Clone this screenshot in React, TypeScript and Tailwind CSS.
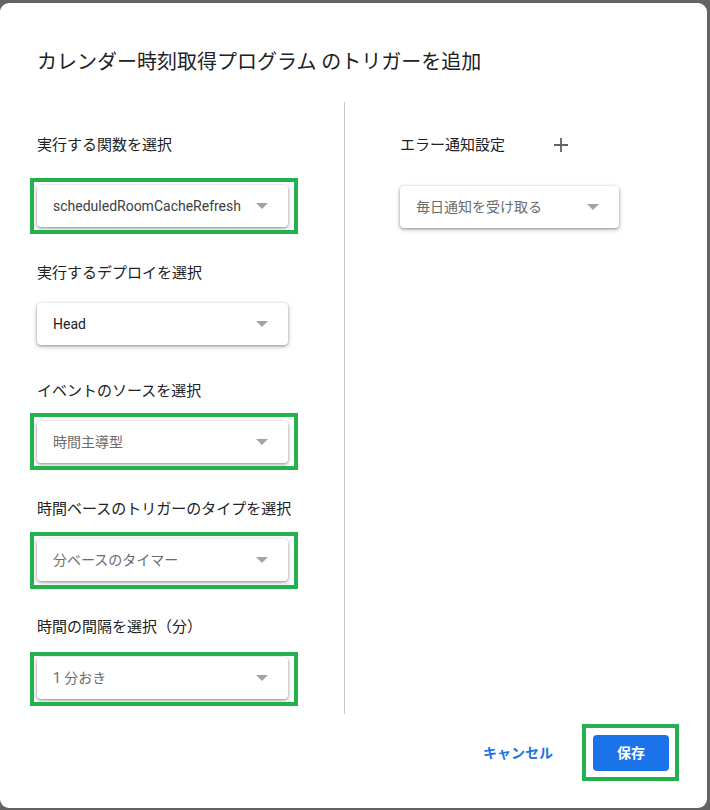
import React from "react";

const FONT = { fontFamily: 'Roboto, "Noto Sans CJK JP", sans-serif' };

function Arrow() {
  return (
    <svg width="12" height="6" viewBox="0 0 12 6" className="shrink-0">
      <path d="M0 0 L12 0 L6 6 Z" fill="#a3a3a3" />
    </svg>
  );
}

function Select({
  text,
  tone = "dark",
  width = "w-[251px]",
}: {
  text: string;
  tone?: "dark" | "mid" | "light";
  width?: string;
}) {
  const color =
    tone === "dark" ? "text-[#202124]" : tone === "mid" ? "text-[#3c4043]" : "text-[#6b6b6b]";
  return (
    <div
      className={`${width} h-[42px] bg-white rounded-[4px] flex items-center justify-between pl-4 pr-5 shadow-[0_1px_3px_rgba(0,0,0,0.38),0_2px_6px_rgba(0,0,0,0.14)]`}
    >
      <span className={`text-[14px] ${color} whitespace-nowrap`}>{text}</span>
      <Arrow />
    </div>
  );
}

function Green({
  children,
  cls,
}: {
  children: React.ReactNode;
  cls: string;
}) {
  return (
    <div className="relative w-fit">
      <span className={`absolute border-4 border-[#22b14c] pointer-events-none ${cls}`} />
      {children}
    </div>
  );
}

function Label({ children }: { children: React.ReactNode }) {
  return (
    <div className="h-5 leading-5 text-[15px] text-[#202124] whitespace-nowrap">{children}</div>
  );
}

export default function App() {
  return (
    <div className="w-[710px] h-[810px] bg-[#636363] pt-[3px] overflow-hidden" style={FONT}>
      <div className="w-[707px] h-[805px] bg-white rounded-[9px] flex flex-col">
        <div className="pt-[45px] pl-[37px] h-[99px]">
          <h1 className="text-[20px] leading-7 text-[#202124] font-normal whitespace-nowrap">
            カレンダー時刻取得プログラム のトリガーを追加
          </h1>
        </div>
        <div className="flex">
          <div className="w-[344px] pl-[37px] pt-[33px] pb-[15px] flex flex-col">
            <Label>実行する関数を選択</Label>
            <div className="mt-[30px]">
              <Green cls="-left-[7px] -top-[7px] -right-[10px] -bottom-[7px]">
                <Select text="scheduledRoomCacheRefresh" tone="mid" />
              </Green>
            </div>
            <div className="mt-[36px]">
              <Label>実行するデプロイを選択</Label>
            </div>
            <div className="mt-5">
              <Select text="Head" tone="dark" />
            </div>
            <div className="mt-[36px]">
              <Label>イベントのソースを選択</Label>
            </div>
            <div className="mt-5">
              <Green cls="-left-[7px] -top-[8px] -right-[10px] -bottom-[7px]">
                <Select text="時間主導型" tone="light" />
              </Green>
            </div>
            <div className="mt-[36px]">
              <Label>時間ベースのトリガーのタイプを選択</Label>
            </div>
            <div className="mt-5">
              <Green cls="-left-[7px] -top-[7px] -right-[10px] -bottom-[8px]">
                <Select text="分ベースのタイマー" tone="light" />
              </Green>
            </div>
            <div className="mt-[36px]">
              <Label>時間の間隔を選択（分）</Label>
            </div>
            <div className="mt-5">
              <Green cls="-left-[7px] -top-[5px] -right-[10px] -bottom-[7px]">
                <Select text="1 分おき" tone="light" />
              </Green>
            </div>
          </div>
          <div className="w-px bg-[#c8c8c8]" />
          <div className="flex-1 pl-[55px] pt-[33px] flex flex-col">
            <div className="flex items-center h-5">
              <Label>エラー通知設定</Label>
              <svg width="16" height="16" viewBox="0 0 16 16" className="ml-[48px]">
                <path d="M8 1 V15 M1 8 H15" stroke="#5f6368" strokeWidth="1.8" />
              </svg>
            </div>
            <div className="mt-[31px]">
              <Select text="毎日通知を受け取る" tone="light" width="w-[219px]" />
            </div>
          </div>
        </div>
        <div className="flex justify-end items-center pt-[21px] pr-[38px]">
          <button className="h-9 px-4 text-[14px] font-semibold text-[#1a73e8] rounded-[4px]">
            キャンセル
          </button>
          <div className="ml-6">
            <Green cls="-left-[11px] -top-[11px] -right-[10px] -bottom-[10px]">
              <button className="w-[76px] h-9 bg-[#1a73e8] text-white text-[14px] font-bold rounded-[4px] block">
                保存
              </button>
            </Green>
          </div>
        </div>
      </div>
    </div>
  );
}
